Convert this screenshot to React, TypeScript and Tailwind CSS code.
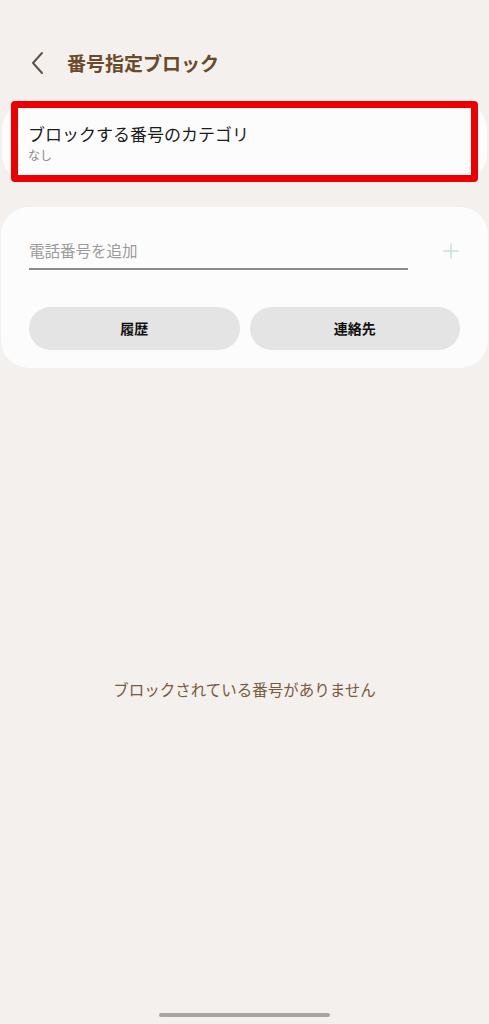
import { Plus } from "lucide-react"

const jp = { fontFamily: '"Noto Sans CJK JP", "Noto Sans", sans-serif' }

export default function App() {
    return (
        <div className="relative w-[489px] h-[1024px] bg-[#f3f0ed] flex flex-col overflow-hidden" style={jp}>
            <header className="h-[103px] flex items-start pl-[28px] pt-[51px]">
                <svg width="20" height="24" viewBox="0 0 20 24" fill="none" className="mr-[19px]">
                    <path d="M14 2 L5 12 L14 22" stroke="#5f5246" strokeWidth="2" strokeLinecap="round" strokeLinejoin="round" />
                </svg>
                <h1 className="text-[19px] leading-[24px] font-bold text-[#6b4a2a]">番号指定ブロック</h1>
            </header>

            <div className="relative">
                <div className="mx-[2px] h-[78px] bg-[#fdfcfc] rounded-[26px] flex flex-col justify-center pl-[26px]">
                    <p className="text-[17px] leading-[24px] text-[#1c1c1c]">ブロックする番号のカテゴリ</p>
                    <p className="text-[12px] leading-[16px] text-[#8a8a8a] mt-[1px]">なし</p>
                </div>
                <div className="absolute top-[-2px] bottom-[-1px] left-[11px] right-[11px] border-[7px] border-[#ee0000] rounded-[4px]" />
            </div>

            <section className="mt-[26px] mx-[1px] bg-[#fdfcfc] rounded-[28px] pt-[30px] pb-[18px] px-[28px]">
                <div className="flex items-center">
                    <div className="w-[379px] shrink-0 border-b-2 border-[#8a8a8a] pb-[6px] pt-[1px]">
                        <span className="text-[15.5px] text-[#9b9b9b]">電話番号を追加</span>
                    </div>
                    <Plus size={24} strokeWidth={1.6} className="shrink-0 ml-[31px] text-[#c9e2d6] -mt-[6px]" />
                </div>
                <div className="grid grid-cols-2 gap-[10px] mt-[37px]">
                    <button className="h-[43px] rounded-full bg-[#e4e4e4] text-[14px] font-bold text-[#111]">履歴</button>
                    <button className="h-[43px] rounded-full bg-[#e4e4e4] text-[14px] font-bold text-[#111]">連絡先</button>
                </div>
            </section>

            <div className="flex-1 flex items-center justify-center pb-[2px]">
                <p className="text-[15.5px] text-[#7a5a3c]">ブロックされている番号がありません</p>
            </div>

            <div className="flex justify-center pb-[7px]">
                <div className="w-[171px] h-[4px] rounded-full bg-[#a8a5a3]" />
            </div>
        </div>
    )
}
